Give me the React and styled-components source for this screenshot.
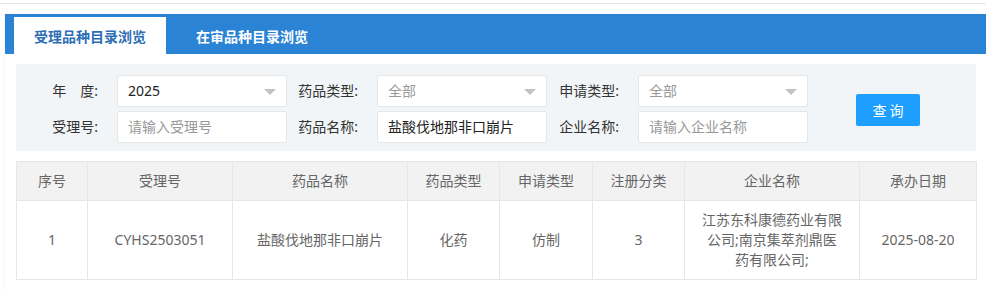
import React from 'react';
import styled, { createGlobalStyle } from 'styled-components';

const GlobalStyle = createGlobalStyle`
  html, body { margin: 0; padding: 0; background: #fff; }
  body {
    font-family: "Noto Sans", "Noto Sans CJK SC", sans-serif;
    font-size: 14px;
    color: #333;
  }
  * { box-sizing: border-box; }
`;

const Page = styled.div`
  width: 986px;
  height: 289px;
  overflow: hidden;
`;

const TopRule = styled.div`
  height: 4px;
  border-bottom: 1px solid #e6e6e6;
`;

const Card = styled.div`
  margin: 10px 0 0 5px;
  background: #fff;
  box-shadow: 0 0 3px rgba(0, 0, 0, 0.08);
  min-height: 280px;
`;

const TabBar = styled.div`
  height: 40px;
  background: #2a83d4;
  display: flex;
  align-items: flex-end;
  padding-left: 9px;
  gap: 10px;
`;

const Tab = styled.div`
  height: 37px;
  padding: 0 20px;
  display: flex;
  align-items: center;
  font-size: 14px;
  font-weight: bold;
  color: ${p => (p.$active ? '#2c6db5' : '#fff')};
  background: ${p => (p.$active ? '#fff' : 'transparent')};
`;

const Content = styled.div`
  padding: 10px 10px 0 11px;
`;

const FilterPanel = styled.div`
  background: #f2f5f7;
  padding: 11px 0 8px 10px;
  display: flex;
  align-items: center;
`;

const FormGrid = styled.div`
  display: grid;
  grid-template-columns: 91px 170px 90px 170px 91px 170px;
  row-gap: 4px;
`;

const Label = styled.div`
  text-align: right;
  padding-right: 19px;
  line-height: 32px;
  color: #333;
  white-space: nowrap;
`;

const Field = styled.div`
  position: relative;
  height: 32px;
  background: #fff;
  border: 1px solid #e6e6e6;
  border-radius: 2px;
  padding-left: 10px;
  line-height: 30px;
  color: ${p => (p.$placeholder ? '#999' : '#222')};
  white-space: nowrap;
  overflow: hidden;
`;

const Arrow = styled.span`
  position: absolute;
  right: 10px;
  top: 13px;
  width: 0;
  height: 0;
  border-style: solid;
  border-width: 6px 6px 0 6px;
  border-color: #c2c2c2 transparent transparent transparent;
`;

const SearchButton = styled.button`
  margin-left: 48px;
  width: 64px;
  height: 32px;
  background: #1e9fff;
  color: #fff;
  border: none;
  border-radius: 2px;
  font-family: inherit;
  font-size: 14px;
  letter-spacing: 3px;
  padding: 0 0 0 3px;
  margin-top: 2px;
`;

const Table = styled.table`
  margin-top: 10px;
  width: 960px;
  border-collapse: collapse;
  table-layout: fixed;
`;

const Th = styled.th`
  background: #f2f2f2;
  color: #666;
  font-weight: normal;
  border: 1px solid #e6e6e6;
  padding: 9px 15px;
  line-height: 20px;
  text-align: center;
  font-size: 14px;
`;

const Td = styled.td`
  color: #666;
  border: 1px solid #e6e6e6;
  padding: 9px 15px;
  line-height: 20px;
  text-align: center;
  font-size: 14px;
`;

const Wrap = styled.span`
  display: block;
  max-width: 141px;
  margin: 0 auto;
`;

const columns = [
  ['序号', 71],
  ['受理号', 145],
  ['药品名称', 175],
  ['药品类型', 92],
  ['申请类型', 93],
  ['注册分类', 92],
  ['企业名称', 175],
  ['承办日期', 117],
];

export default function App() {
  return (
    <>
      <GlobalStyle />
      <Page>
        <TopRule />
        <Card>
          <TabBar>
            <Tab $active>受理品种目录浏览</Tab>
            <Tab>在审品种目录浏览</Tab>
          </TabBar>
          <Content>
            <FilterPanel>
              <FormGrid>
                <Label>年&emsp;度:</Label>
                <Field>2025<Arrow /></Field>
                <Label>药品类型:</Label>
                <Field $placeholder>全部<Arrow /></Field>
                <Label>申请类型:</Label>
                <Field $placeholder>全部<Arrow /></Field>
                <Label>受理号:</Label>
                <Field $placeholder>请输入受理号</Field>
                <Label>药品名称:</Label>
                <Field>盐酸伐地那非口崩片</Field>
                <Label>企业名称:</Label>
                <Field $placeholder>请输入企业名称</Field>
              </FormGrid>
              <SearchButton>查询</SearchButton>
            </FilterPanel>
            <Table>
              <colgroup>
                {columns.map(([n, w]) => (
                  <col key={n} style={{ width: w }} />
                ))}
              </colgroup>
              <thead>
                <tr>
                  {columns.map(([n]) => (
                    <Th key={n}>{n}</Th>
                  ))}
                </tr>
              </thead>
              <tbody>
                <tr>
                  <Td>1</Td>
                  <Td>CYHS2503051</Td>
                  <Td>盐酸伐地那非口崩片</Td>
                  <Td>化药</Td>
                  <Td>仿制</Td>
                  <Td>3</Td>
                  <Td><Wrap>江苏东科康德药业有限公司;南京集萃剂鼎医药有限公司;</Wrap></Td>
                  <Td>2025-08-20</Td>
                </tr>
              </tbody>
            </Table>
          </Content>
        </Card>
      </Page>
    </>
  );
}
